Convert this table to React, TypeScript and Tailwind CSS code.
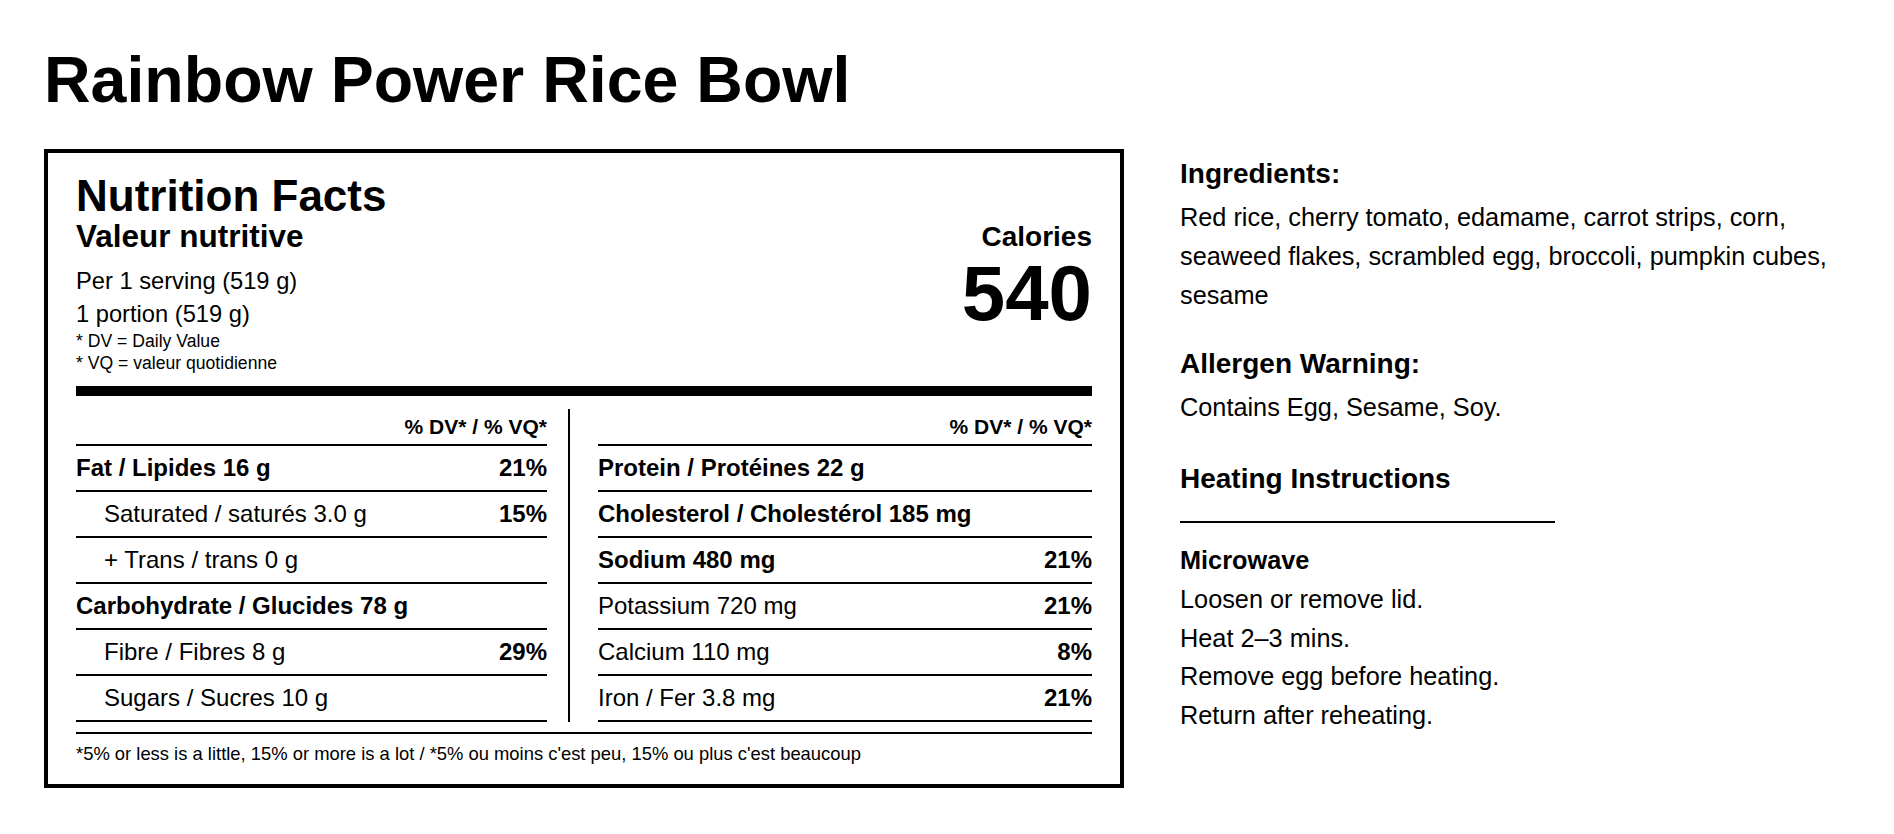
import React from "react";

type Row = { label: string; pct?: string; bold?: boolean; indent?: boolean };

const leftRows: Row[] = [
  { label: "Fat / Lipides 16 g", pct: "21%", bold: true },
  { label: "Saturated / saturés 3.0 g", pct: "15%", indent: true },
  { label: "+ Trans / trans 0 g", indent: true },
  { label: "Carbohydrate / Glucides 78 g", bold: true },
  { label: "Fibre / Fibres 8 g", pct: "29%", indent: true },
  { label: "Sugars / Sucres 10 g", indent: true },
];

const rightRows: Row[] = [
  { label: "Protein / Protéines 22 g", bold: true },
  { label: "Cholesterol / Cholestérol 185 mg", bold: true },
  { label: "Sodium 480 mg", pct: "21%", bold: true },
  { label: "Potassium 720 mg", pct: "21%" },
  { label: "Calcium 110 mg", pct: "8%" },
  { label: "Iron / Fer 3.8 mg", pct: "21%" },
];

function Column({ rows }: { rows: Row[] }) {
  return (
    <div className="flex flex-col">
      <div className="h-[37px] flex items-center justify-end border-b-2 border-black text-[21px] font-bold leading-none">
        % DV* / % VQ*
      </div>
      {rows.map((r) => (
        <div
          key={r.label}
          className="h-[46px] flex items-center justify-between border-b-2 border-black text-[24px] leading-none"
        >
          <span className={(r.bold ? "font-bold " : "") + (r.indent ? "pl-[28px]" : "")}>{r.label}</span>
          {r.pct ? <span className="font-bold">{r.pct}</span> : null}
        </div>
      ))}
    </div>
  );
}

export default function App() {
  return (
    <div className="min-h-screen bg-white text-black font-['Liberation_Sans',Arial,Helvetica,sans-serif] px-[44px] pt-[48px]">
      <h1 className="text-[64.5px] font-bold leading-none">Rainbow Power Rice Bowl</h1>

      <div className="mt-[36px] flex items-start gap-[56px]">
        {/* Nutrition label */}
        <div className="w-[1080px] shrink-0 border-4 border-black px-[28px] pt-[21px] pb-[19px]">
          <div className="flex items-start justify-between">
            <div className="flex flex-col">
              <div className="text-[44px] font-bold leading-none">Nutrition Facts</div>
              <div className="mt-[3px] text-[31.5px] font-bold leading-none">Valeur nutritive</div>
              <div className="mt-[13px] text-[23.7px] leading-[32.6px]">
                <div>Per 1 serving (519 g)</div>
                <div>1 portion (519 g)</div>
              </div>
              <div className="mt-[1px] text-[17.6px] leading-[21.7px]">
                <div>* DV = Daily Value</div>
                <div>* VQ = valeur quotidienne</div>
              </div>
            </div>
            <div className="mt-[49px] flex flex-col items-end">
              <div className="text-[28px] font-bold leading-none">Calories</div>
              <div className="mt-[3px] text-[78px] font-bold leading-none">540</div>
            </div>
          </div>

          <div className="mt-[11px] h-[10px] bg-black" />

          <div className="mt-[13px] grid grid-cols-2 gap-[28px]">
            <div className="border-r-2 border-black pr-[21px]">
              <Column rows={leftRows} />
            </div>
            <Column rows={rightRows} />
          </div>

          <div className="mt-[10px] h-[2px] bg-black" />
          <div className="pt-[9px] text-[18.4px] leading-[22px]">
            *5% or less is a little, 15% or more is a lot / *5% ou moins c'est peu, 15% ou plus c'est beaucoup
          </div>
        </div>

        {/* Right panel */}
        <div className="flex-1 pt-[8px] flex flex-col">
          <div className="text-[28px] font-bold leading-[33.6px]">Ingredients:</div>
          <p className="mt-[8px] text-[25.3px] leading-[38.7px]">
            Red rice, cherry tomato, edamame, carrot strips, corn, seaweed flakes, scrambled egg, broccoli, pumpkin cubes, sesame
          </p>

          <div className="mt-[33px] text-[28px] font-bold leading-[33.6px]">Allergen Warning:</div>
          <p className="mt-[7px] text-[25.3px] leading-[38.7px]">Contains Egg, Sesame, Soy.</p>

          <div className="mt-[35px] text-[28px] font-bold leading-[33.6px]">Heating Instructions</div>
          <div className="mt-[26px] w-[375px] h-[2px] bg-black" />

          <div className="mt-[18px] text-[25.3px] leading-[38.7px]">
            <div className="font-bold">Microwave</div>
            <div>Loosen or remove lid.</div>
            <div>Heat 2–3 mins.</div>
            <div>Remove egg before heating.</div>
            <div>Return after reheating.</div>
          </div>
        </div>
      </div>
    </div>
  );
}
